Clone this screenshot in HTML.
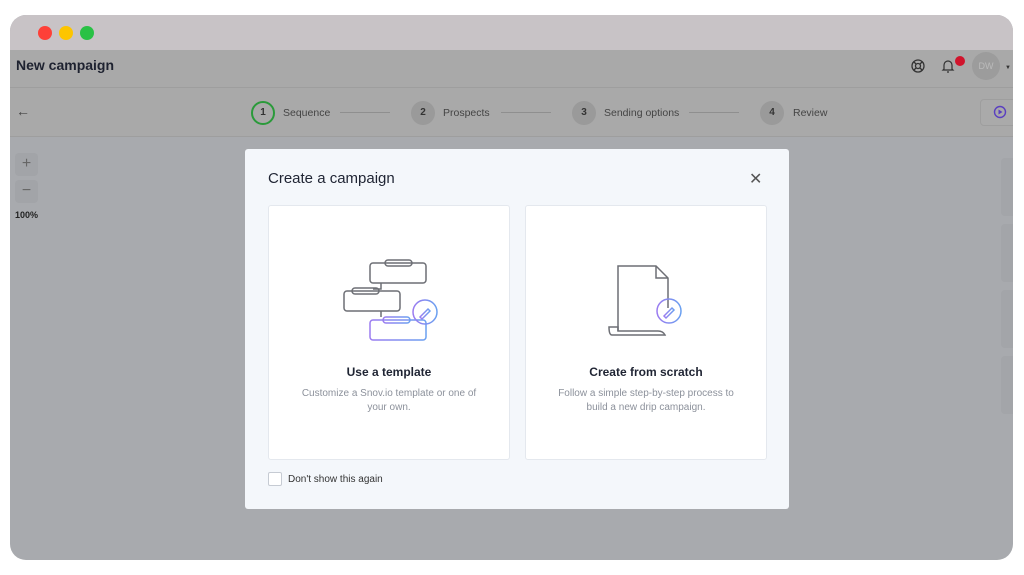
<!DOCTYPE html>
<html><head><style>
*{margin:0;padding:0;box-sizing:border-box}
body{width:1024px;height:575px;background:#fff;font-family:"Liberation Sans",sans-serif;position:relative;overflow:hidden}
.win{position:absolute;left:10px;top:15px;width:1003px;height:545px;border-radius:16px;overflow:hidden;background:#a8aaae}
.tb{position:absolute;left:0;top:0;width:100%;height:35px;background:#c8c3c6}
.dot{position:absolute;top:11px;width:14px;height:14px;border-radius:50%}
.hd{position:absolute;left:0;top:35px;width:100%;height:38px;background:#a9a9a9;border-bottom:1px solid #9e9e9e}
.st{position:absolute;left:0;top:73px;width:100%;height:49px;background:#a9a9a9;border-bottom:1px solid #9e9e9e}
.circ{position:absolute;top:13px;width:24px;height:24px;border-radius:50%;background:#9a9a9a;font-size:10px;font-weight:bold;color:#333;text-align:center;line-height:24px}
.lbl{position:absolute;top:19px;font-size:10.5px;color:#444}
.ln{position:absolute;top:24px;height:1px;width:50px;background:#8f8f8f}
.zb{position:absolute;left:5px;width:23px;height:23px;border-radius:4px;background:#a2a4a8;color:#666;text-align:center;line-height:22px;font-size:16px}
.modal{position:absolute;left:245px;top:149px;width:544px;height:360px;background:#f4f7fb;border-radius:3px}
.card{position:absolute;top:56px;width:242px;height:255px;background:#fff;border:1px solid #e4e8ee;border-radius:3px;text-align:center}
.card h3{position:absolute;top:159px;width:100%;font-size:12px;color:#1f2433}
.card p{position:absolute;top:181px;left:30px;right:30px;font-size:10px;color:#8c919b;line-height:14px}
.rp{position:absolute;right:0;width:12px;border-radius:4px 0 0 4px;background:#a3a5a9}
</style></head><body>
<div class="win">
<div class="tb"><div class="dot" style="left:28px;background:#fe4038"></div><div class="dot" style="left:49px;background:#fdc500"></div><div class="dot" style="left:70px;background:#29c145"></div></div>
<div class="hd"><div style="position:absolute;left:6px;top:7px;font-size:14px;font-weight:bold;color:#1e2230">New campaign</div>
<svg style="position:absolute;left:900px;top:8px" width="16" height="16" viewBox="0 0 16 16" fill="none" stroke="#333" stroke-width="1.3"><circle cx="8" cy="8" r="6"/><circle cx="8" cy="8" r="2.5"/><path d="M4 4l2.3 2.3M12 4L9.7 6.3M4 12l2.3-2.3M12 12L9.7 9.7"/></svg>
<svg style="position:absolute;left:931px;top:8px" width="14" height="16" viewBox="0 0 14 16" fill="none" stroke="#333" stroke-width="1.2"><path d="M3 11V7a4 4 0 018 0v4l1 1H2z M6 14h2"/></svg>
<div style="position:absolute;left:945px;top:6px;width:10px;height:10px;border-radius:50%;background:#d0142c"></div>
<div style="position:absolute;left:962px;top:2px;width:28px;height:28px;border-radius:50%;background:#9c9c9c;color:#bbb;font-size:9px;text-align:center;line-height:28px">DW</div>
<div style="position:absolute;left:995px;top:15px;font-size:6px;color:#333">▼</div></div>
<div class="st"><div style="position:absolute;left:6px;top:15px;font-size:14px;color:#444">←</div>
<div class="circ" style="left:241px;background:none;border:2px solid #2a9a3a;line-height:20px">1</div><div class="lbl" style="left:273px">Sequence</div><div class="ln" style="left:330px"></div>
<div class="circ" style="left:401px">2</div><div class="lbl" style="left:433px">Prospects</div><div class="ln" style="left:491px"></div>
<div class="circ" style="left:562px">3</div><div class="lbl" style="left:594px">Sending options</div><div class="ln" style="left:679px"></div>
<div class="circ" style="left:750px">4</div><div class="lbl" style="left:783px">Review</div>
<div style="position:absolute;left:970px;top:11px;width:40px;height:27px;border-radius:4px;background:#aaa;border:1px solid #9e9e9e"></div>
<svg style="position:absolute;left:983px;top:17px" width="14" height="14" viewBox="0 0 14 14"><circle cx="7" cy="7" r="5.5" fill="none" stroke="#5a3fc0" stroke-width="1.4"/><path d="M5.5 4.5v5l4-2.5z" fill="#5a3fc0"/></svg></div>
<div class="zb" style="top:138px">+</div><div class="zb" style="top:165px">−</div>
<div style="position:absolute;left:5px;top:195px;font-size:9px;font-weight:bold;color:#222">100%</div>
<div class="rp" style="top:143px;height:58px"></div><div class="rp" style="top:209px;height:58px"></div><div class="rp" style="top:275px;height:58px"></div><div class="rp" style="top:341px;height:58px"></div>
</div>
<div class="modal">
<div style="position:absolute;left:23px;top:21px;font-size:15px;color:#1f2433">Create a campaign</div>
<div style="position:absolute;left:504px;top:20px;font-size:16px;color:#555">✕</div>
<div class="card" style="left:23px">
<svg style="position:absolute;left:70px;top:50px" width="110" height="90" viewBox="0 0 110 90" fill="none" stroke-width="1.5">
<defs><linearGradient id="g" x1="0" x2="1"><stop offset="0" stop-color="#9b7bf0"/><stop offset="1" stop-color="#6aa0f0"/></linearGradient></defs>
<g stroke="#6d6f75"><rect x="31" y="7" width="56" height="20" rx="3"/><rect x="46" y="4" width="27" height="6" rx="3"/><path d="M42 27v6h-8"/><rect x="5" y="35" width="56" height="20" rx="3"/><rect x="13" y="32" width="27" height="6" rx="3"/><path d="M42 55v6"/></g>
<g stroke="url(#g)"><rect x="31" y="64" width="56" height="20" rx="3"/><rect x="44" y="61" width="27" height="6" rx="3"/><circle cx="86" cy="56" r="12"/><path d="M81 61l8-8 2 2-8 8z"/></g></svg>
<h3>Use a template</h3><p>Customize a Snov.io template or one of your own.</p></div>
<div class="card" style="left:280px">
<svg style="position:absolute;left:80px;top:55px" width="80" height="80" viewBox="0 0 80 80" fill="none" stroke-width="1.5">
<path d="M12 70V5h38l12 12v30" stroke="#6d6f75"/><path d="M50 5v12h12" stroke="#6d6f75"/><path d="M3 66h9v4h40c4 0 6 2 7 4H6c-2 0-3-3-3-8z" stroke="#6d6f75"/>
<circle cx="63" cy="50" r="12" stroke="url(#g)"/><path d="M58 55l8-8 2 2-8 8z" stroke="url(#g)"/></svg>
<h3>Create from scratch</h3><p>Follow a simple step-by-step process to build a new drip campaign.</p></div>
<div style="position:absolute;left:23px;top:323px;width:14px;height:14px;border:1px solid #c6cbd3;border-radius:2px;background:#fff"></div>
<div style="position:absolute;left:43px;top:325px;font-size:10px;color:#333">Don't show this again</div>
</div>
</body></html>
